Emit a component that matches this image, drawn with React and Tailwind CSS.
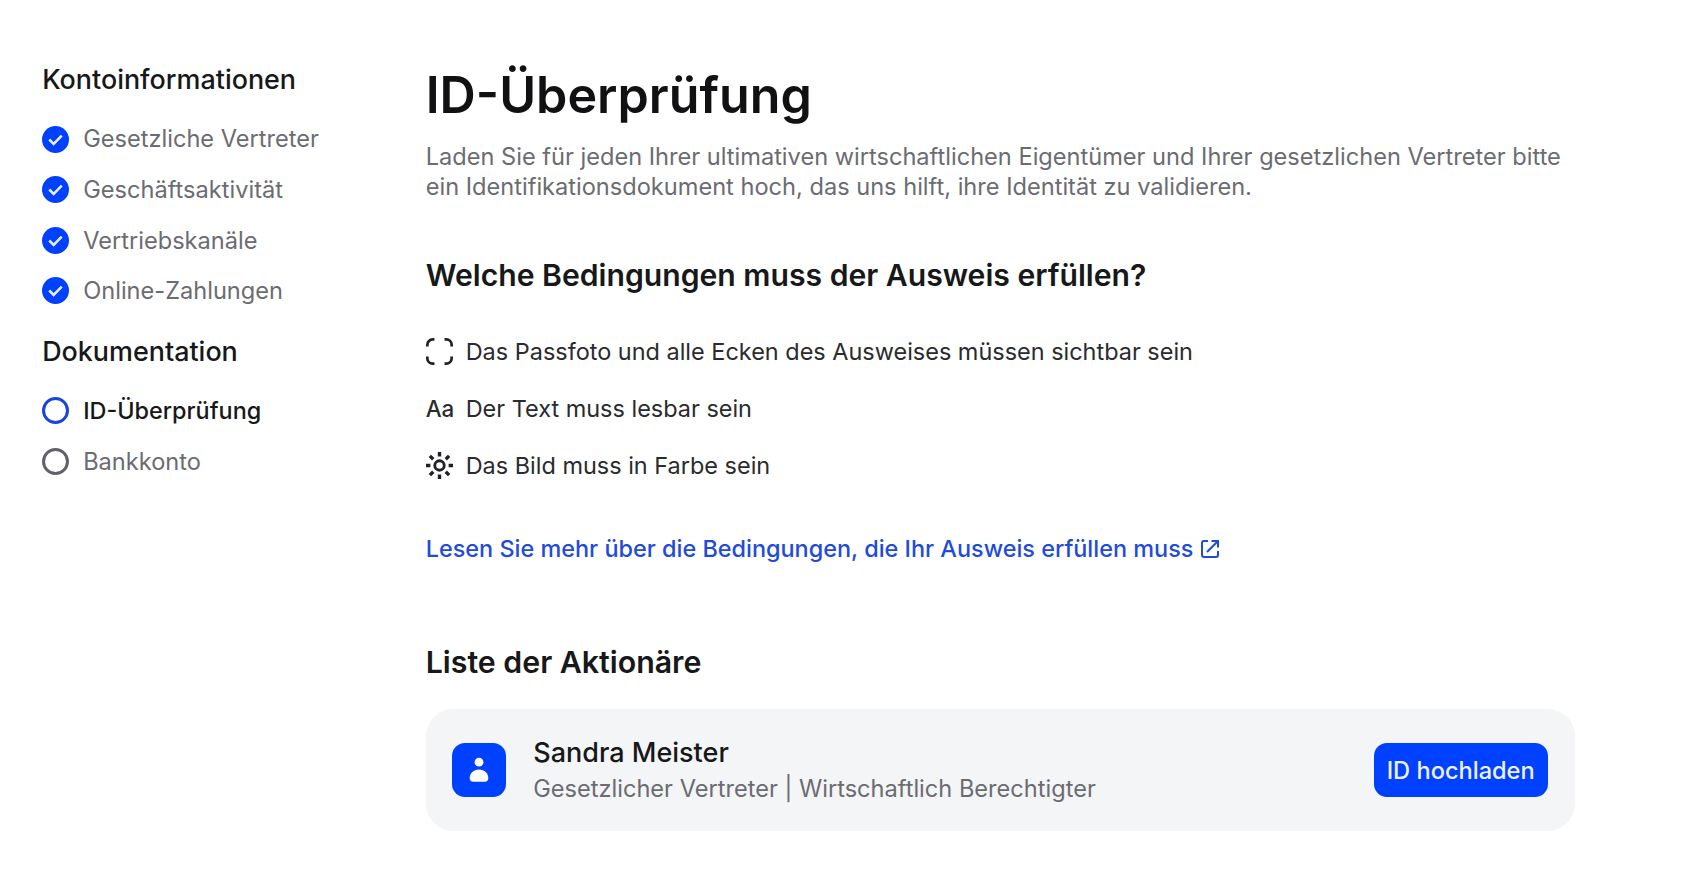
import React from "react";

const sections = [
  {
    title: "Kontoinformationen",
    items: [
      { label: "Gesetzliche Vertreter", status: "done" },
      { label: "Geschäftsaktivität", status: "done" },
      { label: "Vertriebskanäle", status: "done" },
      { label: "Online-Zahlungen", status: "done" },
    ],
  },
  {
    title: "Dokumentation",
    items: [
      { label: "ID-Überprüfung", status: "active" },
      { label: "Bankkonto", status: "todo" },
    ],
  },
];

const StatusIcon = ({ status }) => {
  if (status === "done") {
    return (
      <svg viewBox="0 0 16 16" className="size-[27px] shrink-0" fill="none">
        <circle cx="8" cy="8" r="8" fill="#0040ff" />
        <path
          d="M4.3 8l2.6 2.6 4.8-4.9"
          stroke="#e8f0ff"
          strokeWidth="1.5"
        />
      </svg>
    );
  }
  return (
    <svg viewBox="0 0 16 16" className="size-[27px] shrink-0" fill="none">
      <circle
        cx="8"
        cy="8"
        r="7.1"
        stroke={status === "active" ? "#1a44e0" : "#616369"}
        strokeWidth="1.8"
      />
    </svg>
  );
};

const CornersIcon = () => (
  <svg
    viewBox="0 0 16 16"
    className="size-[27px]"
    fill="none"
    stroke="#202124"
    strokeWidth="1.6"
  >
    <path d="M.8 5V4A3.2 3.2 0 014 .8h1M11 .8h1A3.2 3.2 0 0115.2 4v1M15.2 11v1a3.2 3.2 0 01-3.200 3.200h-1M5 15.200H4A3.200 3.200 0 01.8 12v-1" />
  </svg>
);

const SunIcon = () => (
  <svg
    viewBox="0 0 16 16"
    className="size-[27px]"
    fill="none"
    stroke="#202124"
    strokeWidth="1.7"
  >
    <circle cx="8" cy="8" r="2.8" />
    <path
      strokeWidth="2"
      d="M8 0v2.6M8 13.4V16M0 8h2.6M13.4 8H16M2.3 2.3l2 2M11.7 11.7l2 2M2.3 13.7l2-2M11.7 4.3l2-2"
    />
  </svg>
);

const ExternalIcon = () => (
  <svg
    viewBox="0 0 18 18"
    className="ml-[8px] size-[18px]"
    fill="none"
    stroke="#1f4bdb"
    strokeWidth="2"
  >
    <path d="M7 1H3a2 2 0 00-2 2v12a2 2 0 002 2h12a2 2 0 002-2v-4" />
    <path d="M6 12L16.5 1.5M10.5 1H17v6.5" />
  </svg>
);

const conditions = [
  {
    icon: <CornersIcon />,
    text: "Das Passfoto und alle Ecken des Ausweises müssen sichtbar sein",
  },
  {
    icon: <span className="text-[22.4px] font-medium">Aa</span>,
    text: "Der Text muss lesbar sein",
  },
  { icon: <SunIcon />, text: "Das Bild muss in Farbe sein" },
];

const Sidebar = () => (
  <nav className="w-[383.5px] shrink-0 pt-[44.5px]">
    {sections.map((section) => (
      <div key={section.title}>
        <h3 className="flex h-[69.4px] items-center text-[26.9px] font-medium text-[#17181a]">
          {section.title}
        </h3>
        <ul>
          {section.items.map((item) => (
            <li
              key={item.label}
              className={
                item.status === "active"
                  ? "flex h-[50.6px] items-center gap-[14px] text-[23.4px] font-medium text-[#17181a]"
                  : "flex h-[50.6px] items-center gap-[14px] text-[#6b6c72]"
              }
            >
              <StatusIcon status={item.status} />
              {item.label}
            </li>
          ))}
        </ul>
      </div>
    ))}
  </nav>
);

const App = () => {
  return (
    <div className="flex min-h-screen bg-white pl-[42.2px] font-[Inter,sans-serif] text-[23.6px] whitespace-nowrap">
      <Sidebar />
      <main className="w-[1149px] pt-[65px]">
        <h1 className="text-[50.2px] leading-[60px] font-semibold text-[#111113]">
          ID-Überprüfung
        </h1>
        <p className="mt-[17px] leading-[30.3px] text-[#6b6c72]">
          Laden Sie für jeden Ihrer ultimativen wirtschaftlichen Eigentümer und
          Ihrer gesetzlichen Vertreter bitte
          <br />
          ein Identifikationsdokument hoch, das uns hilft, ihre Identität zu
          validieren.
        </p>
        <h2 className="mt-[52.4px] text-[30.15px] leading-10 font-semibold text-[#17181a]">
          Welche Bedingungen muss der Ausweis erfüllen?
        </h2>
        <ul className="mt-[27.8px] text-[23.46px] text-[#2a2b2e]">
          {conditions.map((c) => (
            <li key={c.text} className="flex h-[57.2px] items-center">
              <span className="flex w-[40px] items-center">{c.icon}</span>
              {c.text}
            </li>
          ))}
        </ul>
        <a
          href="#"
          className="mt-[36.6px] flex h-9 items-center text-[23.43px] font-medium text-[#1f4bdb]"
        >
          Lesen Sie mehr über die Bedingungen, die Ihr Ausweis erfüllen muss
          <ExternalIcon />
        </a>
        <h2 className="mt-[74.7px] text-[30.3px] leading-10 font-semibold text-[#17181a]">
          Liste der Aktionäre
        </h2>
        <div className="mt-[27px] flex h-[122px] items-center rounded-[27px] bg-[#f4f5f7] pr-[27px] pl-[26.5px]">
          <div className="flex size-[54px] items-center justify-center rounded-[13px] bg-[#0040ff]">
            <svg viewBox="0 0 20 26" className="h-[26px] w-5" fill="#fff">
              <circle cx="10" cy="5.2" r="4.4" />
              <path d="M10 12.5c5.4 0 9.3 4 9.3 8.6 0 2.5-1.3 3.7-3.5 3.7H4.2C2 24.8.7 23.6.7 21.1.7 16.5 4.6 12.5 10 12.5z" />
            </svg>
          </div>
          <div className="ml-[27px] flex-1 pt-[3px]">
            <div className="text-[27px] leading-9 font-medium text-[#17181a]">
              Sandra Meister
            </div>
            <div className="leading-9 text-[#6b6c72]">
              Gesetzlicher Vertreter | Wirtschaftlich Berechtigter
            </div>
          </div>
          <button className="h-[54px] w-[174px] rounded-[13px] bg-[#0040ff] pt-0.5 font-medium text-[#edf2ff]">
            ID hochladen
          </button>
        </div>
      </main>
    </div>
  );
};

export default App;
